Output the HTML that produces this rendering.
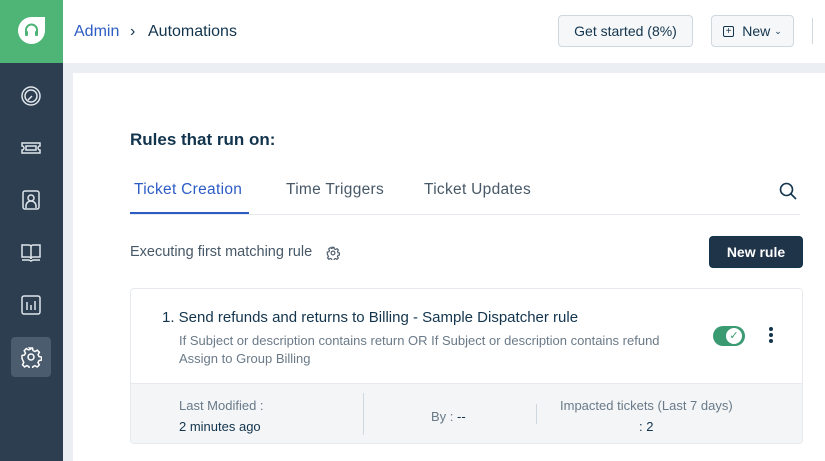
<!DOCTYPE html><html><head><style>
*{margin:0;padding:0;box-sizing:border-box}
html{width:825px;height:461px;overflow:hidden}
body{width:825px;height:461px;overflow:hidden;font-family:"Liberation Sans",sans-serif;background:#ebeff3;position:relative;color:#12344d}
.side{position:absolute;left:0;top:0;width:63px;height:461px;background:#2c3e50}
.logo{position:absolute;left:0;top:0;width:63px;height:63px;background:#4fb577}
.top{position:absolute;left:63px;top:0;right:0;height:63px;background:#fff}
.panel{position:absolute;left:73px;top:73px;width:752px;height:388px;background:#fff;overflow:hidden}
.abs{position:absolute}
.btn{position:absolute;border:1px solid #cfd7df;border-radius:4px;background:#f5f7f9;font-size:14px;color:#12344d;display:flex;align-items:center;justify-content:center}
.ic{position:absolute;left:20px;width:22px;height:22px}
</style></head><body>
<div class="side">
<div class="logo"><svg class="abs" style="left:17px;top:16px" width="29" height="29" viewBox="0 0 29 29"><path d="M14.5 1H28V14.5A13.5 13.5 0 0 1 14.5 28A13.5 13.5 0 0 1 1 14.5A13.5 13.5 0 0 1 14.5 1Z" fill="#fff"/><path d="M9 17v-3a5.5 5.5 0 0 1 11 0v3" fill="none" stroke="#4fb577" stroke-width="2"/><rect x="8" y="15" width="3" height="5" rx="1" fill="#4fb577"/><rect x="18" y="15" width="3" height="5" rx="1" fill="#4fb577"/></svg></div>
<svg class="ic" style="top:85px" viewBox="0 0 22 22" fill="none" stroke="#dfe5ea" stroke-width="1.5"><circle cx="11" cy="11" r="9"/><circle cx="11" cy="11" r="6"/><path d="M8 15l4-4"/></svg>
<svg class="ic" style="top:137px" viewBox="0 0 22 22" fill="none" stroke="#dfe5ea" stroke-width="1.5"><path d="M2 6h18v3a2 2 0 0 0 0 4v3H2v-3a2 2 0 0 0 0-4z"/><rect x="6" y="9" width="10" height="4"/></svg>
<svg class="ic" style="top:189px" viewBox="0 0 22 22" fill="none" stroke="#dfe5ea" stroke-width="1.5"><rect x="3" y="2" width="16" height="18" rx="2"/><circle cx="11" cy="9" r="3"/><path d="M6 19v-2a5 5 0 0 1 10 0v2"/></svg>
<svg class="ic" style="top:241px" viewBox="0 0 22 22" fill="none" stroke="#dfe5ea" stroke-width="1.5"><path d="M2 4h7a2 2 0 0 1 2 2v12a2 2 0 0 0-2-2H2zM20 4h-7a2 2 0 0 0-2 2v12a2 2 0 0 1 2-2h7z"/><path d="M2 19h7l2 1 2-1h7"/></svg>
<svg class="ic" style="top:294px" viewBox="0 0 22 22" fill="none" stroke="#dfe5ea" stroke-width="1.5"><rect x="2" y="2" width="18" height="18" rx="2"/><path d="M7 8v8M11 11v5M15 7v9"/></svg>
<div class="abs" style="left:11px;top:337px;width:40px;height:40px;border-radius:4px;background:#4b5c6e"></div>
<svg class="ic" style="top:346px" viewBox="0 0 22 22" fill="none" stroke="#fff" stroke-width="1.5"><circle cx="11" cy="11" r="3"/><path d="M9.5 2h3l.5 2.5 2 1 2.3-1.3 2.1 2.1-1.3 2.3.9 2 2.5.5v3l-2.5.5-1 2 1.3 2.3-2.1 2.1-2.3-1.3-2 .9-.5 2.5h-3l-.5-2.5-2-1-2.3 1.3-2.1-2.1 1.3-2.3-.9-2L2 12.5v-3l2.5-.5 1-2L4.2 4.7l2.1-2.1 2.3 1.3 2-.9z"/></svg>
</div>
<div class="top">
<div class="abs" style="left:11px;top:23px;font-size:16px;color:#2c5cc5">Admin</div>
<div class="abs" style="left:67px;top:23px;font-size:16px;color:#12344d">›</div>
<div class="abs" style="left:85px;top:23px;font-size:16px;color:#12344d">Automations</div>
<div class="btn" style="left:495px;top:15px;width:135px;height:32px">Get started (8%)</div>
<div class="btn" style="left:648px;top:15px;width:83px;height:32px"><span style="display:inline-block;width:11px;height:11px;border:1px solid #12344d;border-radius:2px;font-size:10px;line-height:9px;text-align:center;margin-right:8px">+</span>New <span style="font-size:9px;margin-left:4px">⌄</span></div>
<div class="abs" style="left:749px;top:18px;width:1px;height:26px;background:#cfd7df"></div>
</div>
<div class="panel">
<div class="abs" style="left:57px;top:57px;font-size:17px;font-weight:bold">Rules that run on:</div>
<div class="abs" style="left:61px;top:108px;font-size:15.5px;color:#2c5cc5;letter-spacing:.3px">Ticket Creation</div>
<div class="abs" style="left:213px;top:108px;font-size:15.5px;color:#475867;letter-spacing:.3px">Time Triggers</div>
<div class="abs" style="left:351px;top:108px;font-size:15.5px;color:#475867;letter-spacing:.3px">Ticket Updates</div>
<svg class="abs" style="left:706px;top:109px" width="18" height="18" viewBox="0 0 18 18" fill="none" stroke="#12344d" stroke-width="1.6"><circle cx="7.5" cy="7.5" r="6"/><path d="M12 12l5 5"/></svg>
<div class="abs" style="left:57px;top:141px;width:670px;height:1px;background:#e6eaee"></div>
<div class="abs" style="left:57px;top:139px;width:119px;height:2px;background:#2c5cc5"></div>
<div class="abs" style="left:57px;top:171px;font-size:14.5px;color:#475867">Executing first matching rule</div>
<svg class="abs" style="left:253px;top:173px" width="14" height="14" viewBox="0 0 22 22" fill="none" stroke="#475867" stroke-width="1.8"><circle cx="11" cy="11" r="3"/><path d="M9.5 2h3l.5 2.5 2 1 2.3-1.3 2.1 2.1-1.3 2.3.9 2 2.5.5v3l-2.5.5-1 2 1.3 2.3-2.1 2.1-2.3-1.3-2 .9-.5 2.5h-3l-.5-2.5-2-1-2.3 1.3-2.1-2.1 1.3-2.3-.9-2L2 12.5v-3l2.5-.5 1-2L4.2 4.7l2.1-2.1 2.3 1.3 2-.9z"/></svg>
<div class="abs" style="left:636px;top:163px;width:94px;height:32px;background:#1f3349;border-radius:4px;color:#fff;font-size:14px;font-weight:bold;display:flex;align-items:center;justify-content:center;border:1px solid #12344d">New rule</div>
<div class="abs" style="left:57px;top:215px;width:673px;height:156px;border:1px solid #e6eaee;border-radius:4px;overflow:hidden">
<div class="abs" style="left:31px;top:20px;font-size:15px;color:#12344d">1. Send refunds and returns to Billing - Sample Dispatcher rule</div>
<div class="abs" style="left:48px;top:43px;font-size:13px;color:#6a7a88;line-height:18px">If Subject or description contains return OR If Subject or description contains refund<br>Assign to Group Billing</div>
<div class="abs" style="left:582px;top:37px;width:32px;height:20px;border-radius:10px;background:#3a9b72"></div>
<div class="abs" style="left:595px;top:39px;width:16px;height:16px;border-radius:8px;background:#fff;color:#3a9b72;font-size:11px;text-align:center;line-height:16px">✓</div>
<div class="abs" style="left:638px;top:38px;width:4px;height:4px;border-radius:2px;background:#12344d;box-shadow:0 6px #12344d,0 12px #12344d"></div>
<div class="abs" style="left:0;top:94px;width:673px;height:62px;background:#f3f5f7;border-top:1px solid #e6eaee"></div>
<div class="abs" style="left:48px;top:109px;font-size:13px;color:#6a7a88">Last Modified :</div>
<div class="abs" style="left:48px;top:130px;font-size:13px;color:#12344d">2 minutes ago</div>
<div class="abs" style="left:232px;top:104px;width:1px;height:42px;background:#cfd7df"></div>
<div class="abs" style="left:300px;top:120px;font-size:13px;color:#6a7a88">By : <span style="color:#12344d">--</span></div>
<div class="abs" style="left:405px;top:115px;width:1px;height:20px;background:#cfd7df"></div>
<div class="abs" style="left:429px;top:109px;font-size:13px;color:#6a7a88">Impacted tickets (Last 7 days)</div>
<div class="abs" style="left:508px;top:130px;font-size:13px;color:#12344d">: 2</div>
</div>
</div>
</body></html>
